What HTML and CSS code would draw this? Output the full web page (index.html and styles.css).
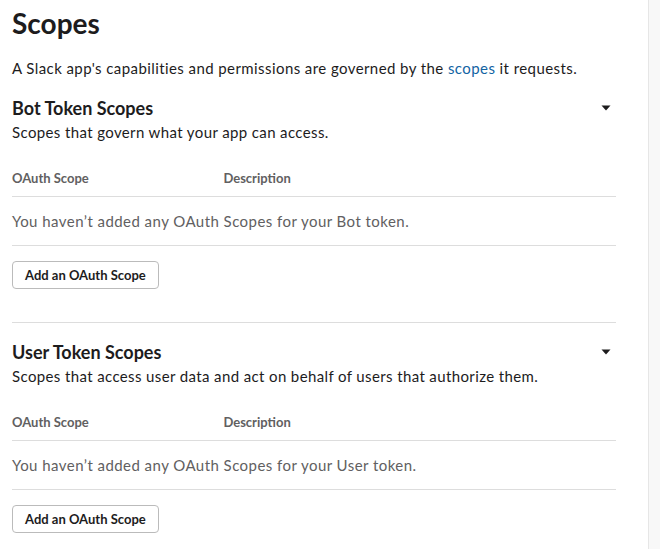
FILE: index.html
```html
<!DOCTYPE html>
<html>
<head>
<meta charset="utf-8">
<link rel="stylesheet" href="styles.css">
</head>
<body>
<div class="layout">
  <main class="main">
    <h1 class="title">Scopes</h1>
    <p class="intro">A Slack app's capabilities and permissions are governed by the <a class="link" href="#">scopes</a> it requests.</p>

    <section class="scope-section">
      <div class="section-head">
        <h2 class="section-title">Bot Token Scopes</h2>
        <svg class="caret" width="10" height="6" viewBox="0 0 10 6"><polygon points="0.5,0.5 9.5,0.5 5,5.5" fill="#1d1c1d"/></svg>
      </div>
      <p class="section-sub">Scopes that govern what your app can access.</p>
      <div class="table">
        <div class="table-head">
          <div class="col-scope">OAuth Scope</div>
          <div class="col-desc">Description</div>
        </div>
        <div class="table-empty">You haven’t added any OAuth Scopes for your Bot token.</div>
      </div>
      <button class="btn">Add an OAuth Scope</button>
    </section>

    <hr class="divider">

    <section class="scope-section">
      <div class="section-head">
        <h2 class="section-title">User Token Scopes</h2>
        <svg class="caret" width="10" height="6" viewBox="0 0 10 6"><polygon points="0.5,0.5 9.5,0.5 5,5.5" fill="#1d1c1d"/></svg>
      </div>
      <p class="section-sub">Scopes that access user data and act on behalf of users that authorize them.</p>
      <div class="table">
        <div class="table-head">
          <div class="col-scope">OAuth Scope</div>
          <div class="col-desc">Description</div>
        </div>
        <div class="table-empty">You haven’t added any OAuth Scopes for your User token.</div>
      </div>
      <button class="btn">Add an OAuth Scope</button>
    </section>
  </main>
  <aside class="side"></aside>
</div>
</body>
</html>
```

FILE: styles.css
```css
* { box-sizing: border-box; }
html, body {
  margin: 0;
  padding: 0;
  height: 100%;
  background: #ffffff;
}
body {
  font-family: Lato, "Noto Sans", sans-serif;
  color: #1d1c1d;
  overflow: hidden;
}
.layout {
  display: flex;
  height: 100%;
}
.main {
  width: 648px;
  flex: none;
  padding: 5px 32px 0 12px;
}
.side {
  flex: 1;
  background: #f8f8f8;
  border-left: 1px solid #e6e6e6;
}
.title {
  margin: 0;
  font-size: 28px;
  line-height: 36px;
  font-weight: 700;
}
.intro {
  margin: 16px 0 0;
  font-size: 15px;
  line-height: 22px;
  letter-spacing: 0.42px;
}
.link {
  color: #1264a3;
  text-decoration: none;
}
.scope-section {
  margin-top: 17px;
}
.section-head {
  display: flex;
  align-items: center;
  justify-content: space-between;
}
.section-title {
  margin: 0;
  font-size: 18px;
  line-height: 24px;
  font-weight: 700;
}
.caret {
  display: block;
  margin-right: 5px;
}
.section-sub {
  margin: 1px 0 0;
  font-size: 15px;
  line-height: 22px;
  letter-spacing: 0.38px;
}
.table {
  margin-top: 17px;
}
.table-head {
  display: flex;
  padding: 8px 0;
  font-size: 13px;
  line-height: 20px;
  font-weight: 700;
  color: #616061;
  border-bottom: 1px solid #dddddd;
}
.col-scope { width: 35%; }
.col-desc { flex: 1; }
.table-empty {
  padding: 13px 0;
  font-size: 15px;
  line-height: 22px;
  letter-spacing: 0.45px;
  color: #616061;
  border-bottom: 1px solid #dddddd;
}
.btn {
  display: block;
  margin-top: 15px;
  height: 28px;
  padding: 0 12px;
  font-family: Lato, "Noto Sans", sans-serif;
  font-size: 13px;
  font-weight: 700;
  color: #1d1c1d;
  background: #ffffff;
  border: 1px solid #bbbbbb;
  border-radius: 4px;
}
.divider {
  margin: 33px 0 0;
  border: 0;
  border-top: 1px solid #dddddd;
  height: 0;
}
```
